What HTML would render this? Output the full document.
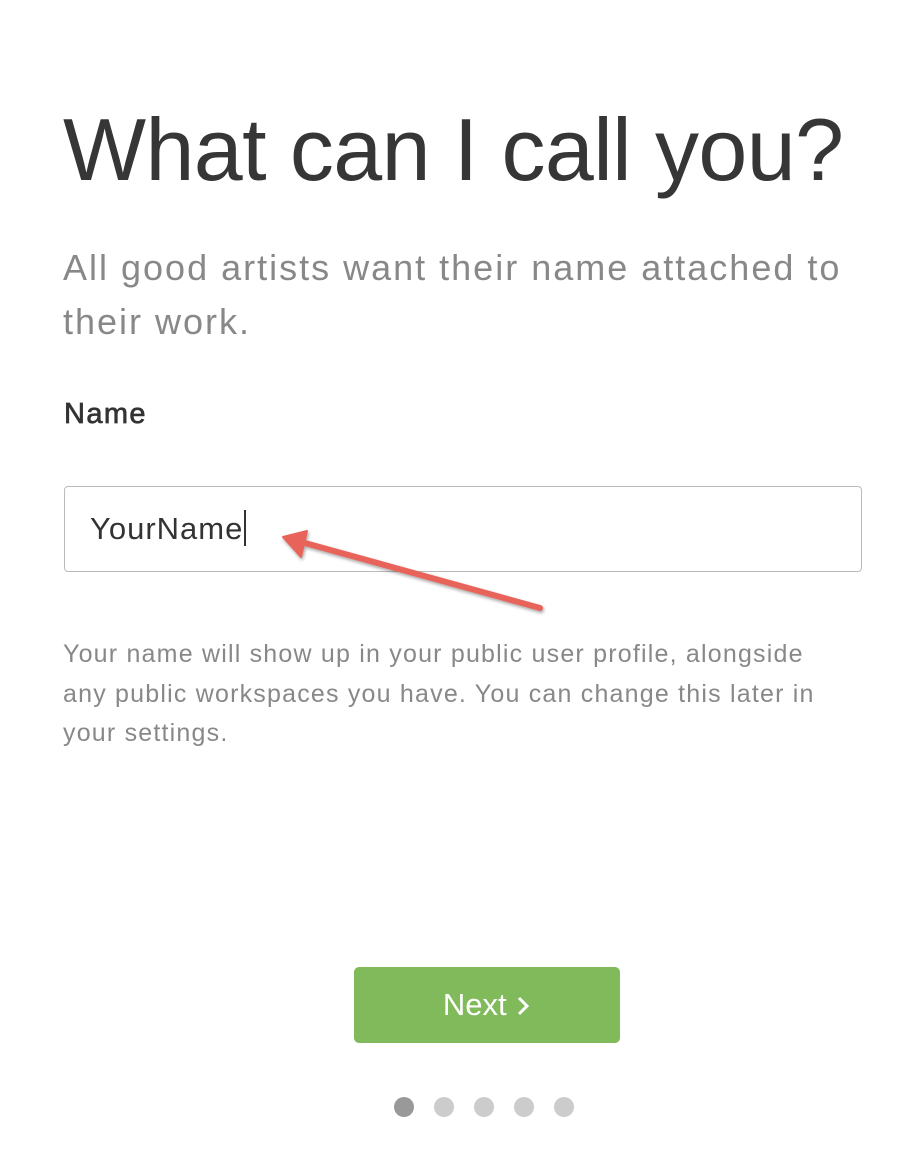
<!DOCTYPE html>
<html><head><style>
body{margin:0;width:905px;height:1168px;background:#fff;font-family:"Liberation Sans",Arial,sans-serif;position:relative;overflow:hidden}
.a{position:absolute;white-space:nowrap}
</style></head><body>
<div class="a" style="left:63px;top:99px;font-size:88px;color:#363636;letter-spacing:-0.6px">What can I call you?</div>
<div class="a" style="left:63px;top:241px;font-size:36px;line-height:54px;color:#888;white-space:normal;width:800px;letter-spacing:2px">All good artists want their name attached to their work.</div>
<div class="a" style="left:64px;top:398px;font-size:29px;color:#333;letter-spacing:1.4px;-webkit-text-stroke:0.7px #333">Name</div>
<div class="a" style="left:64px;top:486px;width:796px;height:84px;border:1px solid #bbb;border-radius:4px"></div>
<div class="a" style="left:90px;top:510px;font-size:31px;color:#333;letter-spacing:1px">YourName<span style="display:inline-block;width:2px;height:36px;background:#333;vertical-align:-7px;margin-left:1px"></span></div>
<svg class="a" style="left:0;top:0" width="905" height="1168">
<defs><filter id="s"><feDropShadow dx="1" dy="2" stdDeviation="1.5" flood-color="#000" flood-opacity="0.35"/></filter></defs>
<g filter="url(#s)" fill="#e8645a" stroke="#e8645a">
<line x1="540" y1="608" x2="305" y2="543" stroke-width="6" stroke-linecap="round"/>
<polygon points="283,537 307,531 301,557" stroke-width="2" stroke-linejoin="round"/>
</g></svg>
<div class="a" style="left:63px;top:635px;font-size:25px;line-height:39.5px;color:#888;white-space:normal;width:785px;letter-spacing:1.2px">Your name will show up in your public user profile, alongside any public workspaces you have. You can change this later in your settings.</div>
<div class="a" style="left:354px;top:967px;width:266px;height:76px;background:#80ba5b;border-radius:5px;color:#fff;font-size:31px;line-height:76px;text-align:center">Next <svg width="16" height="22" viewBox="0 0 16 22" style="vertical-align:-2px"><path d="M4 3l8 8-8 8" fill="none" stroke="#fff" stroke-width="3"/></svg></div>
<div class="a" style="left:394px;top:1097px;width:20px;height:20px;border-radius:50%;background:#999"></div>
<div class="a" style="left:434px;top:1097px;width:20px;height:20px;border-radius:50%;background:#ccc"></div>
<div class="a" style="left:474px;top:1097px;width:20px;height:20px;border-radius:50%;background:#ccc"></div>
<div class="a" style="left:514px;top:1097px;width:20px;height:20px;border-radius:50%;background:#ccc"></div>
<div class="a" style="left:554px;top:1097px;width:20px;height:20px;border-radius:50%;background:#ccc"></div>
</body></html>
